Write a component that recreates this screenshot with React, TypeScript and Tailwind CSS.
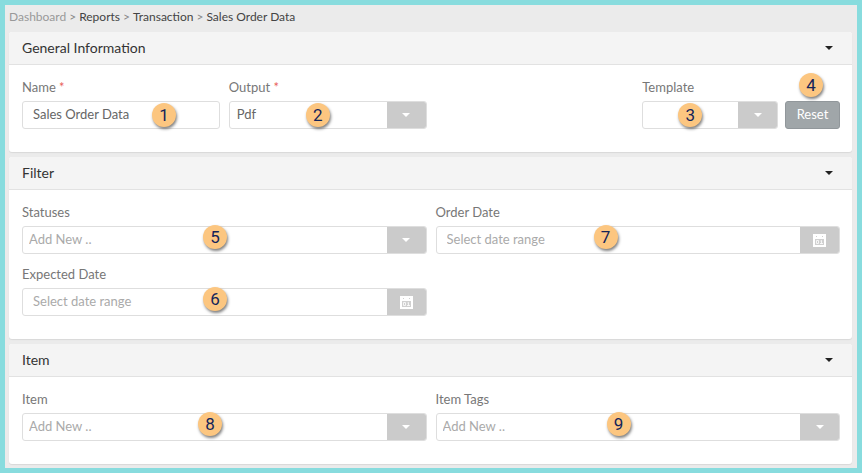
import { type ReactNode } from "react";

function Marker({ value, className }: { value: number; className: string }) {
  return (
    <span
      className={`pointer-events-none absolute z-10 flex h-6 w-6 items-center justify-center rounded-full bg-[#fcc680] font-[Roboto,sans-serif] text-[17px] leading-6 text-[#14245a] shadow-[1px_2px_3px_rgba(0,0,0,0.5)] ${className}`}
    >
      {value}
    </span>
  );
}

function Caret() {
  return (
    <svg className="h-1 w-2" viewBox="0 0 8 4" fill="currentColor">
      <path d="M0 0h8L4 4z" />
    </svg>
  );
}

function CalendarIcon() {
  return (
    <svg className="h-[13px] w-[13px]" viewBox="0 0 13 13">
      <path fill="#fff" d="M0 0h13v13H0z" />
      <path fill="#d0d0d0" d="M3 2h1v1H3zM9 2h1v1H9zM2 5h9v6H2z" />
      <path
        fill="none"
        stroke="#fff"
        strokeWidth=".8"
        d="M3.5 6.5h2v3h-2zM7.5 7l1-.5v3M7 9.5h3"
      />
    </svg>
  );
}

function Panel({ title, children }: { title: string; children: ReactNode }) {
  return (
    <section className="rounded-[3px] bg-white shadow-[0_1px_1px_rgba(0,0,0,0.08)]">
      <header className="flex h-[33px] items-center justify-between rounded-t-[3px] border-b border-[#e2e2e2] bg-[#f4f4f4] pr-[19px] pl-[13px]">
        <h2 className="text-sm text-[#333]">{title}</h2>
        <button
          type="button"
          aria-label={`Collapse ${title}`}
          className="text-[#222]"
        >
          <Caret />
        </button>
      </header>
      <div className="pt-3 pr-3 pb-[23px] pl-[13px]">{children}</div>
    </section>
  );
}

function Label({
  id,
  required,
  children,
}: {
  id: string;
  required?: boolean;
  children: ReactNode;
}) {
  return (
    <label
      htmlFor={id}
      className="mb-1 block text-[13px] leading-5 text-[#777]"
    >
      {children}
      {required && <span className="text-[#e8605a]"> *</span>}
    </label>
  );
}

const box =
  "relative flex h-7 rounded-[3px] border border-[#dedede] bg-white";
const input =
  "min-w-0 flex-1 bg-transparent text-[13px] text-[#666] outline-none placeholder:text-[#aaa]";
const addon =
  "flex w-[39px] shrink-0 items-center justify-center rounded-r-[2px] bg-[#cbcbcb] text-white";

function SelectField({
  id,
  label,
  required,
  option,
  marker,
}: {
  id: string;
  label: string;
  required?: boolean;
  option: string;
  marker: ReactNode;
}) {
  return (
    <div className="min-w-0 flex-1">
      <Label id={id} required={required}>
        {label}
      </Label>
      <div className={box}>
        <select id={id} className={`${input} appearance-none pl-[7px]`}>
          <option>{option}</option>
        </select>
        <span className={`${addon} pointer-events-none`}>
          <Caret />
        </span>
        {marker}
      </div>
    </div>
  );
}

function TagField({
  id,
  label,
  marker,
}: {
  id: string;
  label: string;
  marker: ReactNode;
}) {
  return (
    <div>
      <Label id={id}>{label}</Label>
      <div className={box}>
        <input id={id} placeholder="Add New .." className={`${input} pl-1.5`} />
        <button type="button" aria-label={`Open ${label}`} className={addon}>
          <Caret />
        </button>
        {marker}
      </div>
    </div>
  );
}

function DateField({
  id,
  label,
  marker,
}: {
  id: string;
  label: string;
  marker: ReactNode;
}) {
  return (
    <div>
      <Label id={id}>{label}</Label>
      <div className={box}>
        <input
          id={id}
          placeholder="Select date range"
          className={`${input} pl-2.5`}
        />
        <button type="button" aria-label={`Pick ${label}`} className={addon}>
          <CalendarIcon />
        </button>
        {marker}
      </div>
    </div>
  );
}

export default function App() {
  return (
    <div className="border-[5px] border-[#88dcde] bg-[#ebebeb] pr-[5px] pb-1 pl-1 font-[Lato,sans-serif]">
      <nav className="flex h-[27px] items-center gap-[3px] pb-1 text-xs text-[#444]">
        <a href="#dashboard" className="text-[#999]">
          Dashboard
        </a>
        <span className="text-[#888]">&gt;</span>
        <a href="#reports">Reports</a>
        <span className="text-[#888]">&gt;</span>
        <a href="#transaction">Transaction</a>
        <span className="text-[#888]">&gt;</span>
        <span>Sales Order Data</span>
      </nav>

      <main className="flex flex-col gap-[5px]">
        <Panel title="General Information">
          <div className="grid grid-cols-4 gap-[9px]">
            <div>
              <Label id="name" required>
                Name
              </Label>
              <div className={box}>
                <input
                  id="name"
                  defaultValue="Sales Order Data"
                  className={`${input} pl-2.5`}
                />
                <Marker value={1} className="top-px left-[129px]" />
              </div>
            </div>
            <SelectField
              id="output"
              label="Output"
              required
              option="Pdf"
              marker={<Marker value={2} className="top-px left-[76px]" />}
            />
            <div className="col-start-4 flex items-end gap-[7px]">
              <SelectField
                id="template"
                label="Template"
                option=""
                marker={<Marker value={3} className="top-px left-[35px]" />}
              />
              <div className="relative">
                <button
                  type="button"
                  className="block h-7 w-[55px] rounded-[3px] border border-[#91979b] bg-[#a0a6a9] text-[13px] text-white"
                >
                  Reset
                </button>
                <Marker value={4} className="-top-7 left-3.5" />
              </div>
            </div>
          </div>
        </Panel>

        <Panel title="Filter">
          <div className="grid grid-cols-2 gap-x-[9px] gap-y-2.5">
            <TagField
              id="statuses"
              label="Statuses"
              marker={<Marker value={5} className="-top-0.5 left-[180px]" />}
            />
            <DateField
              id="order-date"
              label="Order Date"
              marker={<Marker value={7} className="-top-0.5 left-[157px]" />}
            />
            <DateField
              id="expected-date"
              label="Expected Date"
              marker={<Marker value={6} className="-top-0.5 left-[180px]" />}
            />
          </div>
        </Panel>

        <Panel title="Item">
          <div className="grid grid-cols-2 gap-[9px]">
            <TagField
              id="item"
              label="Item"
              marker={<Marker value={8} className="-top-0.5 left-[175px]" />}
            />
            <TagField
              id="item-tags"
              label="Item Tags"
              marker={<Marker value={9} className="-top-0.5 left-[170px]" />}
            />
          </div>
        </Panel>
      </main>
    </div>
  );
}
